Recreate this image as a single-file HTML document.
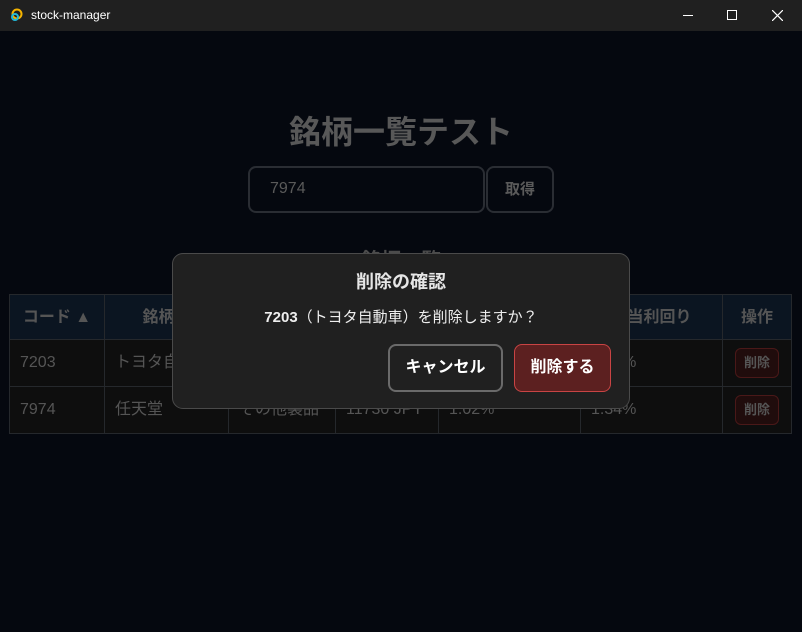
<!DOCTYPE html>
<html><head><meta charset="utf-8"><style>
*{margin:0;padding:0;box-sizing:border-box}
body{width:802px;height:632px;background:#05080f;font-family:"Liberation Sans","Noto Sans CJK JP",sans-serif;position:relative;overflow:hidden;color:#5a5a5a}
.tb{position:absolute;left:0;top:0;width:802px;height:31px;background:#202020;color:#fff;font-size:12px}
.tb .t{position:absolute;left:31px;top:8px}
.ab{position:absolute}
h1{position:absolute;left:0;width:802px;top:107px;text-align:center;font-size:32px;font-weight:bold;color:#585858}
.inp{position:absolute;left:248px;top:166px;width:237px;height:47px;border:2px solid #2a2d33;border-radius:8px;color:#5a5a5a;font-size:16px;padding:12px 20px}
.btn{position:absolute;left:486px;top:166px;width:68px;height:47px;border:2px solid #2a2d33;border-radius:8px;font-weight:bold;font-size:15px;text-align:center;line-height:43px;color:#5a5a5a}
h2{position:absolute;left:0;width:802px;top:244px;text-align:center;font-size:20px;font-weight:bold;color:#4c4c4c}
table{position:absolute;left:9px;top:294px;border-collapse:collapse;width:783px;font-size:16px}
td,th{border:1px solid #25282c;padding:0 10px;text-align:left;line-height:20px;vertical-align:middle}
th{background:#0b1521;height:45px;text-align:center;color:#555;font-weight:bold;padding-top:2px}
td{background:#0e0e0e;height:47px;color:#555}
.del{display:inline-block;border:1px solid #4a1818;background:#200c0c;border-radius:6px;padding:4px 8px;font-size:13px;font-weight:bold;color:#555;line-height:20px}
.dlg{position:absolute;left:172px;top:253px;width:458px;height:156px;background:#202020;border:1px solid #4a4a4a;border-radius:11px;text-align:center;color:#eee}
.dlg .h{position:absolute;top:14px;width:100%;font-size:18px;font-weight:bold;color:#e6e6e6}
.dlg .m{position:absolute;top:52px;width:100%;font-size:15px;color:#eee}
.b1{position:absolute;left:215px;top:90px;width:115px;height:48px;border:2px solid #6a6a6a;border-radius:8px;font-size:16px;font-weight:bold;line-height:44px;color:#fff}
.b2{position:absolute;left:341px;top:90px;width:97px;height:48px;border:1px solid #c94444;background:#5c2020;border-radius:8px;font-size:16px;font-weight:bold;line-height:46px;color:#fff}
</style></head><body>
<div class="tb">
<svg class="ab" style="left:10px;top:8px" width="14" height="14" viewBox="0 0 14 14"><circle cx="7" cy="6" r="4.5" fill="none" stroke="#f5b400" stroke-width="2"/><circle cx="5" cy="9" r="3" fill="none" stroke="#22b8d8" stroke-width="2"/></svg>
<span class="t">stock-manager</span>
<div class="ab" style="left:683px;top:15px;width:10px;height:1px;background:#fff"></div>
<div class="ab" style="left:727px;top:10px;width:10px;height:10px;border:1px solid #fff"></div>
<svg class="ab" style="left:772px;top:10px" width="11" height="11"><path d="M0 0L11 11M11 0L0 11" stroke="#fff" stroke-width="1.2"/></svg>
</div>
<h1>銘柄一覧テスト</h1>
<div class="inp">7974</div>
<div class="btn">取得</div>
<h2>銘柄一覧</h2>
<table>
<tr><th style="width:95px">コード ▲</th><th style="width:124px">銘柄名</th><th style="width:107px">業種</th><th style="width:103px">株価</th><th style="width:142px">利回り</th><th style="width:142px">配当利回り</th><th>操作</th></tr>
<tr><td>7203</td><td>トヨタ自動車</td><td>輸送用機器</td><td>2800 JPY</td><td>2.50%</td><td>2.86%</td><td style="text-align:center"><span class="del">削除</span></td></tr>
<tr><td>7974</td><td>任天堂</td><td>その他製品</td><td>11730 JPY</td><td>1.02%</td><td>1.34%</td><td style="text-align:center"><span class="del">削除</span></td></tr>
</table>
<div class="dlg">
<div class="h">削除の確認</div>
<div class="m"><b>7203</b>（トヨタ自動車）を削除しますか？</div>
<div class="b1">キャンセル</div>
<div class="b2">削除する</div>
</div>
</body></html>
